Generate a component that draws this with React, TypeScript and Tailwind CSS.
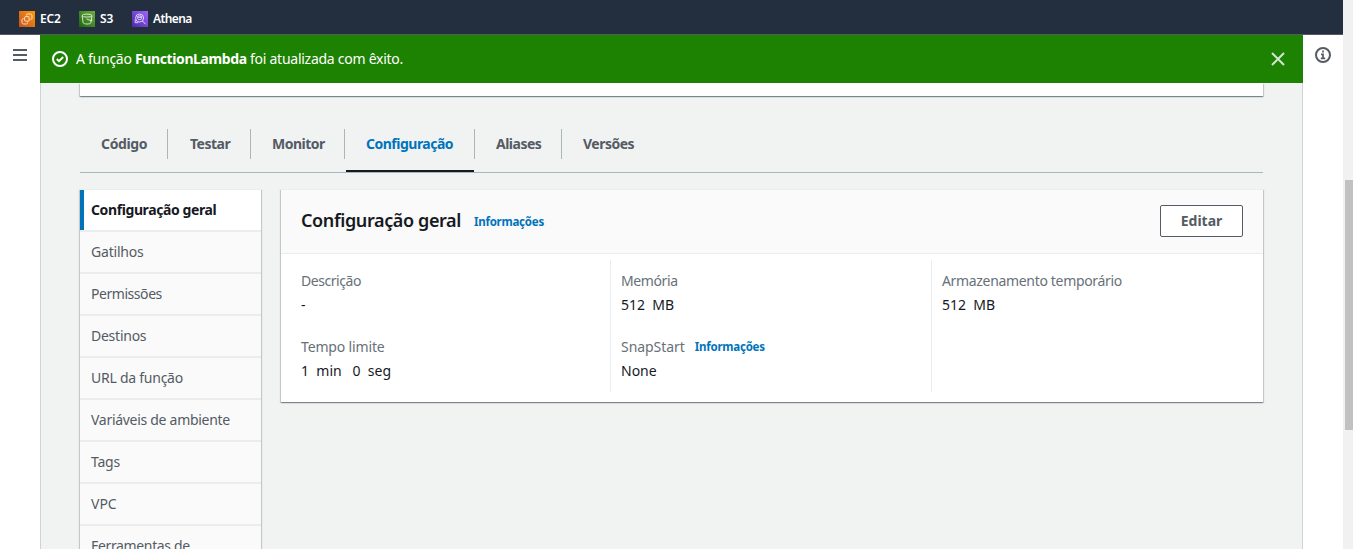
import React from "react";

const services = [
  { name: "EC2", tile: "bg-linear-to-tr from-[#c8511b] to-[#f90]", gap: "mr-[18px]", text: "w-[21px] tracking-[-0.2px]" },
  { name: "S3", tile: "bg-linear-to-tr from-[#1b660f] to-[#6cae3e]", gap: "mr-[18px]", text: "w-[14px] tracking-[-0.1px]" },
  { name: "Athena", tile: "bg-linear-to-tr from-[#4d27aa] to-[#a166ff]", gap: "", text: "tracking-[-0.6px]" },
];

function ServiceGlyph({ name }: { name: string }) {
  return (
    <svg viewBox="0 0 16 16" className="size-4" fill="none" stroke="#fff" strokeOpacity="0.85" strokeWidth="0.9">
      {name === "EC2" && (
        <>
          <rect x="5.6" y="5.6" width="4.6" height="4.6" rx="1" />
          <path d="M7.3 4.6c0-1 .5-1.6 1.4-1.6h2.6c1 0 1.7.7 1.7 1.7v2.2c0 1-.6 1.6-1.6 1.6" />
          <path d="M8.7 11.3c0 1-.6 1.7-1.6 1.7H4.7C3.7 13 3 12.400 3 11.400V9.200c0-1 .6-1.600 1.600-1.600" />
        </>
      )}
      {name === "S3" && (
        <>
          <ellipse cx="8" cy="4.6" rx="5" ry="1.5" />
          <path d="M3 4.600l1.200 7.200c.3 1.600 7.300 1.600 7.600 0L13 4.600M7.500 8l4.500 1.600c1.300.4 1.500-.6.4-1" />
        </>
      )}
      {name === "Athena" && (
        <>
          <circle cx="7.600" cy="7" r="4" />
          <path d="M10.500 10l3 3.200M5.800 5.600v2.200c0 1 3.600 1 3.600 0V5.600" />
          <ellipse cx="7.600" cy="5.600" rx="1.800" ry="0.800" />
          <path d="M3.200 8.500v3.200h3" />
        </>
      )}
    </svg>
  );
}

const tabs = [
  { label: "Código", box: "w-[88px]", pad: "pl-[21px]", text: "tracking-[-0.35px]" },
  { label: "Testar", box: "w-[83px]", pad: "pl-[22px]", text: "tracking-[-0.5px]" },
  { label: "Monitor", box: "w-[94px]", pad: "pl-[21px]", text: "tracking-[-0.5px]" },
  { label: "Configuração", box: "w-[130px]", pad: "pl-[21px]", text: "tracking-[-0.5px]", active: true },
  { label: "Aliases", box: "w-[87px]", pad: "pl-[21px]", text: "tracking-[-0.5px]" },
  { label: "Versões", box: "w-[90px]", pad: "pl-[21px]", text: "tracking-[-0.5px]" },
];

const menu = [
  { label: "Gatilhos", text: "tracking-[-0.2px]" },
  { label: "Permissões", text: "tracking-[-0.45px]" },
  { label: "Destinos", text: "tracking-[-0.25px]" },
  { label: "URL da função", text: "tracking-[-0.25px]" },
  { label: "Variáveis de ambiente", text: "tracking-[-0.29px]" },
  { label: "Tags", text: "tracking-[-0.2px]" },
  { label: "VPC", text: "tracking-[0px]" },
  { label: "Ferramentas de", text: "tracking-[-0.35px]" },
];

const cardShadow =
  "shadow-[0_1px_1px_0_rgba(0,28,36,0.3),1px_1px_1px_0_rgba(0,28,36,0.15),-1px_1px_1px_0_rgba(0,28,36,0.15)]";

const infoLink = "text-[11.5px] font-bold tracking-[-0.24px] text-[#0073bb]";

function Field({ label, value, info, text }: { label: string; value: string; info?: boolean; text: string }) {
  return (
    <div className="h-[66px]">
      <div className="flex h-6 items-center text-[#687078]">
        <span className={text}>{label}</span>
        {info && <span className={`ml-[10px] pt-[2px] ${infoLink}`}>Informações</span>}
      </div>
      <div className="flex h-6 items-center whitespace-pre text-[#16191f]">{value}</div>
    </div>
  );
}

export default function App() {
  return (
    <div className="flex h-[549px] w-[1353px] overflow-hidden bg-white font-['Noto_Sans',sans-serif] text-[14px] text-[#545b64]">
      <div className="flex w-[1343px] flex-col">
        <header className="flex h-[35px] shrink-0 items-center border-b border-[#55585e] bg-[#232f3e] pt-[3px] pl-[19px] text-[12px] font-semibold text-white">
          {services.map((s) => (
            <div key={s.name} className={`flex items-center ${s.gap}`}>
              <span className={`mr-[5px] size-4 ${s.tile}`}>
                <ServiceGlyph name={s.name} />
              </span>
              <span className={`whitespace-nowrap ${s.text}`}>{s.name}</span>
            </div>
          ))}
        </header>
        <div className="flex min-h-0 flex-1">
          <aside className="flex w-10 shrink-0 justify-center pt-[14px]">
            <svg viewBox="0 0 14 12" className="h-3 w-[14px]" fill="#545b64">
              <path d="M0 0h14v2H0zM0 5h14v2H0zM0 10h14v2H0z" />
            </svg>
          </aside>
          <main className="flex w-[1263px] shrink-0 flex-col">
            <div className="flex h-12 shrink-0 items-center bg-[#1d8102] pr-[18px] pl-3 text-white">
              <svg viewBox="0 0 16 16" className="size-4" fill="none" stroke="#fff" strokeWidth="2">
                <circle cx="8" cy="8" r="7" />
                <path d="M4.800 8l2.200 2.200 4.200-4.200" />
              </svg>
              <span className="ml-2 flex-1 pb-[2px] tracking-[-0.26px]">
                A função <b className="tracking-[-0.4px]">FunctionLambda</b> foi atualizada com êxito.
              </span>
              <svg viewBox="0 0 14 14" className="size-[14px]" fill="none" stroke="#d3e7cf" strokeWidth="2">
                <path d="M1 1l12 12M13 1L1 13" />
              </svg>
            </div>
            <div className="flex min-h-0 flex-1 flex-col overflow-hidden border-x border-[#d0d3d4] bg-[#f1f3f3] px-[39px]">
              <div className={`h-[13px] shrink-0 bg-white ${cardShadow}`} />
              <nav className="flex h-[77px] w-[1183px] shrink-0 items-end border-b border-[#aab7b8] font-bold">
                {tabs.map((t, i) => (
                  <div key={t.label} className={`flex h-[43px] flex-col ${t.box}`}>
                    <div
                      className={`flex h-[30px] items-center pb-px ${t.pad} ${i < 5 ? "border-r border-[#aab7b8]" : ""} ${t.active ? "text-[#0073bb]" : ""}`}
                    >
                      <span className={t.text}>{t.label}</span>
                    </div>
                    {t.active && <div className="mt-[11px] mr-px ml-px h-[2px] bg-[#16191f]" />}
                  </div>
                ))}
              </nav>
              <div className="mt-4 flex items-start">
                <div className={`w-[181px] border-t border-[#eaeded] bg-[#fafafa] ${cardShadow}`}>
                  <div className="flex h-[42px] items-center border-b-2 border-[#eaeded] bg-white">
                    <span className="h-10 w-1 bg-[#0073bb]" />
                    <span className="ml-[7px] pb-[2px] font-bold tracking-[-0.4px] text-[#16191f]">Configuração geral</span>
                  </div>
                  {menu.map((m) => (
                    <div key={m.label} className="flex h-[42px] items-center border-b-2 border-[#eaeded] pb-[2px] pl-[11px]">
                      <span className={`whitespace-nowrap ${m.text}`}>{m.label}</span>
                    </div>
                  ))}
                </div>
                <section className={`ml-5 w-[982px] border-t border-[#eaeded] bg-white ${cardShadow}`}>
                  <div className="flex h-16 items-center border-b border-[#eaeded] bg-[#fafafa] px-5 pb-[2px]">
                    <h2 className="pb-px text-[18px] font-semibold tracking-[-0.38px] text-[#16191f]">Configuração geral</h2>
                    <span className={`ml-[13px] pt-[2px] ${infoLink}`}>Informações</span>
                    <button className="ml-auto h-8 w-[83px] rounded-[2px] border border-[#545b64] bg-white font-bold">
                      Editar
                    </button>
                  </div>
                  <div className="flex h-[148px] pt-[6px]">
                    <div className="h-[132px] w-[330px] border-r border-[#eaeded] pt-2 pl-5">
                      <Field label="Descrição" value="-" text="tracking-[-0.45px]" />
                      <Field label="Tempo limite" value="1  min   0  seg" text="tracking-[-0.15px]" />
                    </div>
                    <div className="h-[132px] w-[321px] border-r border-[#eaeded] pt-2 pl-[10px]">
                      <Field label="Memória" value="512  MB" text="tracking-[-0.4px]" />
                      <Field label="SnapStart" value="None" info text="tracking-[-0.05px]" />
                    </div>
                    <div className="pt-2 pl-[10px]">
                      <Field label="Armazenamento temporário" value="512  MB" text="tracking-[-0.33px]" />
                    </div>
                  </div>
                </section>
              </div>
            </div>
          </main>
          <aside className="flex w-10 justify-center pt-3">
            <svg viewBox="0 0 16 16" className="size-4" fill="none" stroke="#545b64" strokeWidth="2">
              <circle cx="8" cy="8" r="7" />
              <path d="M8 3.600v1.800M6 7.400h2v4M5.800 11.400h4.400" strokeWidth="1.7" />
            </svg>
          </aside>
        </div>
      </div>
      <div className="w-[10px] bg-[#f1f1f1] pt-[180px] pl-[2px]">
        <div className="h-[250px] bg-[#c1c1c1]" />
      </div>
    </div>
  );
}
